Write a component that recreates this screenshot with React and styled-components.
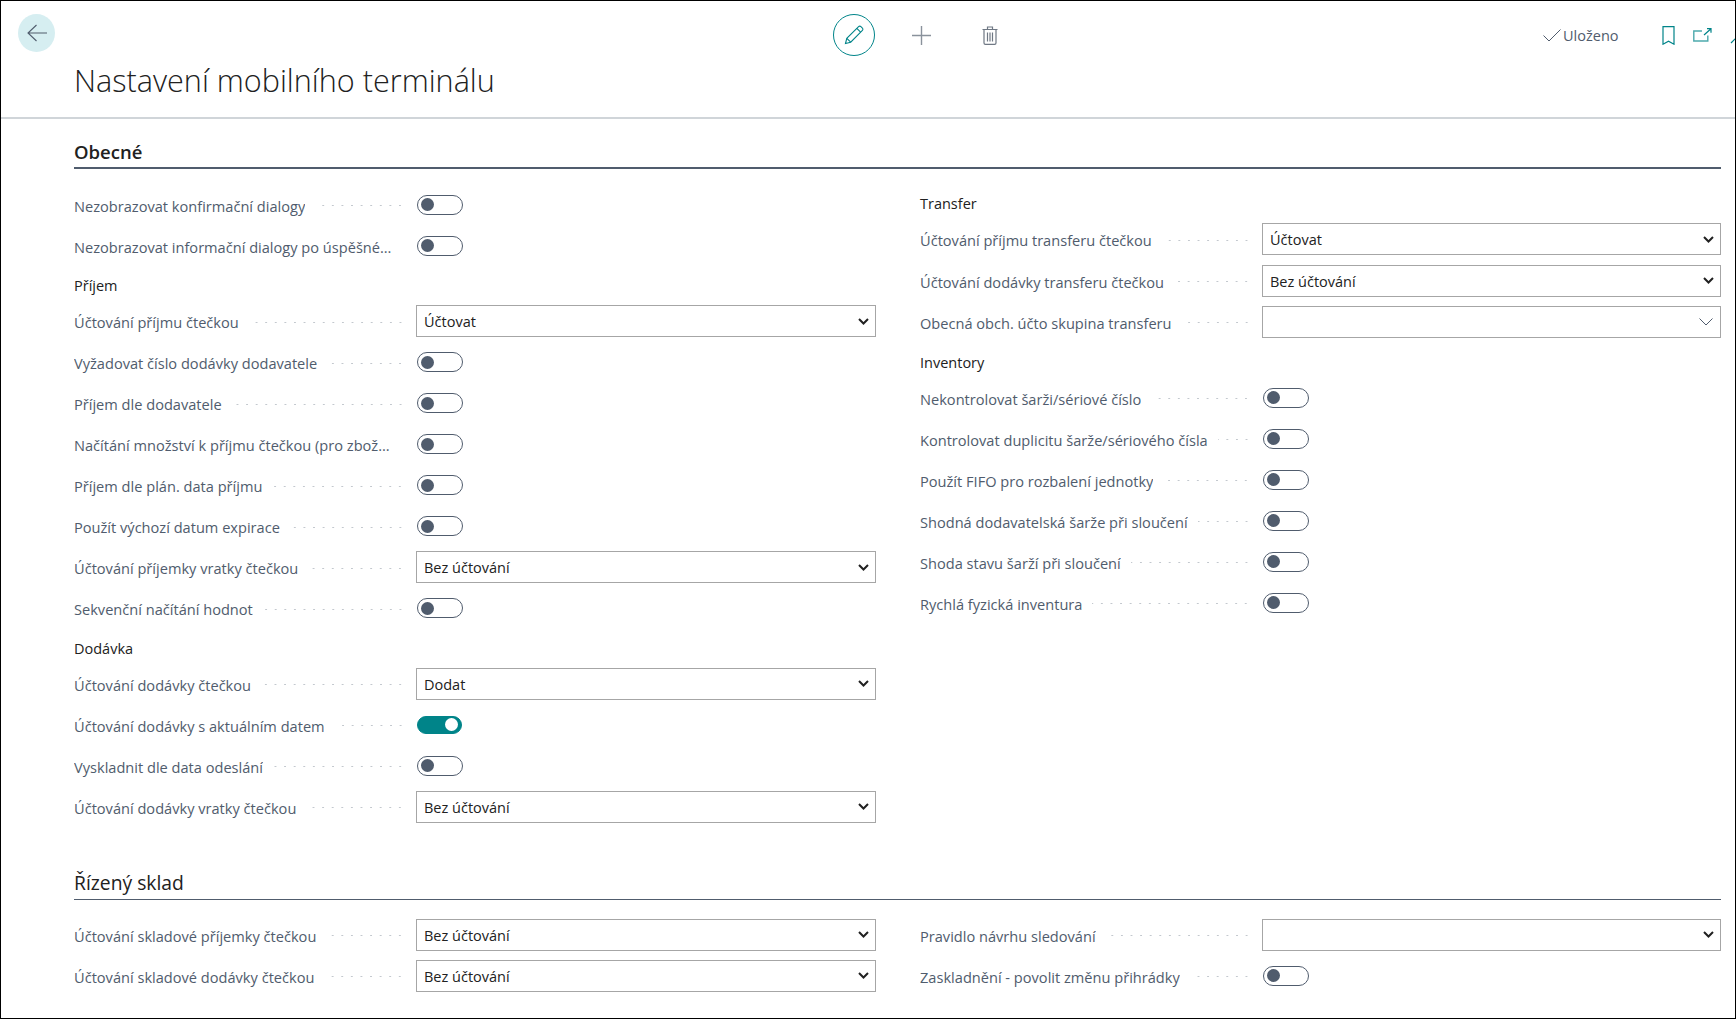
import React from "react";
import styled, { createGlobalStyle } from "styled-components";

const GlobalStyle = createGlobalStyle`
  html, body {
    margin: 0;
    padding: 0;
    background: #fff;
    font-family: "Open Sans", "Liberation Sans", sans-serif;
  }
  * {
    box-sizing: border-box;
  }
`;

const Page = styled.div`
  width: 1736px;
  height: 1019px;
  border: 1px solid #000;
  background: #fff;
  overflow: hidden;
`;

const Header = styled.header`
  height: 118px;
  border-bottom: 2px solid #d0d5d9;
`;

const TopBar = styled.div`
  display: flex;
  align-items: flex-start;
  height: 52px;
  padding: 13px 0 0 17px;
`;

const BackButton = styled.div`
  width: 37px;
  height: 38px;
  border-radius: 50%;
  background: #d6eef1;
  display: flex;
  align-items: center;
  justify-content: center;
  flex-shrink: 0;
`;

const Actions = styled.div`
  display: flex;
  align-items: center;
  height: 42px;
  margin-left: 778px;
`;

const EditButton = styled.div`
  width: 42px;
  height: 42px;
  border-radius: 50%;
  border: 1px solid #008489;
  display: flex;
  align-items: center;
  justify-content: center;
`;

const PlainAction = styled.div`
  display: flex;
  align-items: center;
  justify-content: center;
  margin-left: ${(p) => p.$gap}px;
`;

const Saved = styled.div`
  display: flex;
  align-items: center;
  height: 42px;
  margin-left: 545px;
  font-size: 14.5px;
  color: #505c6d;
  flex-shrink: 0;
  gap: 2px;
`;

const PageTools = styled.div`
  display: flex;
  align-items: center;
  height: 42px;
  margin-left: 43px;
  flex-shrink: 0;
`;

const ToolIcon = styled.div`
  display: flex;
  margin-left: ${(p) => p.$gap}px;
  flex-shrink: 0;
`;

const Title = styled.h1`
  margin: 6px 0 0;
  padding-left: 73px;
  font-size: 30.6px;
  line-height: 42px;
  font-weight: 300;
  color: #212121;
`;

const Content = styled.main`
  padding: 0 14px 0 73px;
`;

const Section = styled.section`
  margin-top: ${(p) => p.$top}px;
`;

const SectionHead = styled.h2`
  margin: 0;
  height: 50px;
  display: flex;
  align-items: flex-end;
  padding-bottom: ${(p) => (p.$open ? "2px" : "3px")};
  font-size: ${(p) => (p.$open ? "18.5px" : "19.3px")};
  line-height: 26px;
  font-weight: ${(p) => (p.$open ? 600 : 400)};
  color: #212121;
  border-bottom: ${(p) => (p.$open ? "2px" : "1px")} solid #505c6d;
`;

const Columns = styled.div`
  display: grid;
  grid-template-columns: 802px 801px;
  column-gap: 44px;
  padding-top: ${(p) => p.$top}px;
`;

const Group = styled.h3`
  margin: 0;
  height: 34.5px;
  padding-top: 11px;
  font-size: 14.5px;
  line-height: 18px;
  font-weight: 500;
  color: #212121;
`;

const Row = styled.div`
  display: grid;
  grid-template-columns: 342px 1fr;
  height: ${(p) => (p.$tall ? "41.4px" : "41px")};
  align-items: center;
`;

const LabelCell = styled.div`
  display: flex;
  align-items: center;
  min-width: 0;
  padding: 2px 11px 0 0;
`;

const Label = styled.span`
  font-size: 14.6px;
  line-height: 20px;
  color: #505c6d;
  white-space: nowrap;
  overflow: hidden;
  text-overflow: ellipsis;
  max-width: 318px;
`;

const Leader = styled.span`
  flex: 1;
  min-width: 0;
  height: 3px;
  margin-left: 10px;
  background-image: radial-gradient(circle, #c3c8ce 0.8px, transparent 1px);
  background-size: 9.6px 3px;
  background-position: right center;
  background-repeat: repeat-x;
`;

const SelectBox = styled.div`
  height: 32px;
  border: 1px solid #a6a6a6;
  display: flex;
  align-items: center;
  justify-content: space-between;
  padding: 0 6px 0 7px;
  font-size: 14.5px;
  color: #212121;
`;

const SelectValue = styled.span`
  padding-top: 1px;
`;

const LookupChevron = styled.span`
  display: flex;
  padding-right: 1px;
`;

const Track = styled.div`
  width: ${(p) => (p.$on ? "45px" : "46px")};
  height: ${(p) => (p.$on ? "18px" : "20px")};
  margin-left: 1px;
  border-radius: 10px;
  display: flex;
  align-items: center;
  border: 1px solid ${(p) => (p.$on ? "#008489" : "#505c6d")};
  background: ${(p) => (p.$on ? "#008489" : "#fff")};
  justify-content: ${(p) => (p.$on ? "flex-end" : "flex-start")};
  padding: 0 3px;
`;

const Knob = styled.div`
  width: 13px;
  height: 13px;
  border-radius: 50%;
  background: ${(p) => (p.$on ? "#fff" : "#505c6d")};
`;

const ArrowIcon = () => (
  <svg width="20" height="18" viewBox="0 0 20 18" fill="none" stroke="#505c6d" strokeWidth="1.1">
    <path d="M20 9H1M9.5 1L1 9l8.5 8" />
  </svg>
);

const PencilIcon = () => (
  <svg width="20" height="20" viewBox="0 0 20 20" fill="none" stroke="#008489" strokeWidth="1.1">
    <path d="M1.5 18.5l1.3-5.2L14.6 1.6a1.6 1.6 0 0 1 2.3 0l1.5 1.5a1.6 1.6 0 0 1 0 2.3L6.7 17.2z" />
    <path d="M2.8 13.3l3.9 3.9M12.8 3.4l3.8 3.8" />
  </svg>
);

const PlusIcon = () => (
  <svg width="19" height="19" viewBox="0 0 19 19" fill="none" stroke="#8a929c" strokeWidth="1.4">
    <path d="M9.5 0v19M0 9.5h19" />
  </svg>
);

const TrashIcon = () => (
  <svg width="16" height="19" viewBox="0 0 16 19" fill="none" stroke="#6f7884" strokeWidth="1.2">
    <path d="M0.5 3.5h15M5.5 3.5V1h5v2.5" />
    <path d="M2 3.5V17a1.4 1.4 0 0 0 1.4 1.4h9.2A1.4 1.4 0 0 0 14 17V3.5" />
    <path d="M5.5 6.5v9M8 6.5v9M10.5 6.5v9" />
  </svg>
);

const CheckIcon = () => (
  <svg width="18" height="13" viewBox="0 0 18 13" fill="none" stroke="#505c6d" strokeWidth="1">
    <path d="M0.5 6.5l5.5 5.5L17.5 0.5" />
  </svg>
);

const BookmarkIcon = () => (
  <svg width="13" height="19" viewBox="0 0 13 19" fill="none" stroke="#008489" strokeWidth="1.2">
    <path d="M1 0.6h11v17.6l-5.5-3-5.5 3z" />
  </svg>
);

const OpenIcon = () => (
  <svg width="19" height="14" viewBox="0 0 19 14" fill="none" stroke="#008489" strokeWidth="1.2">
    <path d="M9 3H0.8v10h14V7.5" strokeWidth="1.4" opacity="0.7" />
    <path d="M11 7L18 0.7M14 0.7h4v4" />
  </svg>
);

const CollapseIcon = () => (
  <svg width="18" height="18" viewBox="0 0 18 18" fill="none" stroke="#008489" strokeWidth="1.2">
    <path d="M1 17L16 2M10 2h6v6" />
  </svg>
);

const BoldChevron = () => (
  <svg width="11" height="7" viewBox="0 0 11 7" fill="none" stroke="#212121" strokeWidth="2">
    <path d="M1 1l4.5 4.5L10 1" />
  </svg>
);

const ThinChevron = () => (
  <svg width="14" height="8" viewBox="0 0 14 8" fill="none" stroke="#505c6d" strokeWidth="1">
    <path d="M0.5 0.5L7 7l6.5-6.5" />
  </svg>
);

const Toggle = ({ on }) => (
  <Track $on={on}>
    <Knob $on={on} />
  </Track>
);

const Select = ({ value }) => (
  <SelectBox>
    <SelectValue>{value}</SelectValue>
    <BoldChevron />
  </SelectBox>
);

const Lookup = () => (
  <SelectBox>
    <span />
    <LookupChevron>
      <ThinChevron />
    </LookupChevron>
  </SelectBox>
);

const Field = ({ label, tall, children }) => (
  <Row $tall={tall}>
    <LabelCell>
      <Label>{label}</Label>
      <Leader />
    </LabelCell>
    {children}
  </Row>
);

const BEZ = "Bez účtování";

const App = () => {
  return (
    <Page>
      <GlobalStyle />
      <Header>
        <TopBar>
          <BackButton>
            <ArrowIcon />
          </BackButton>
          <Actions>
            <EditButton>
              <PencilIcon />
            </EditButton>
            <PlainAction $gap={37}>
              <PlusIcon />
            </PlainAction>
            <PlainAction $gap={51}>
              <TrashIcon />
            </PlainAction>
          </Actions>
          <Saved>
            <CheckIcon />
            <span>Uloženo</span>
          </Saved>
          <PageTools>
            <ToolIcon $gap={0}>
              <BookmarkIcon />
            </ToolIcon>
            <ToolIcon $gap={18}>
              <OpenIcon />
            </ToolIcon>
            <ToolIcon $gap={18}>
              <CollapseIcon />
            </ToolIcon>
          </PageTools>
        </TopBar>
        <Title>Nastavení mobilního terminálu</Title>
      </Header>
      <Content>
        <Section $top={0}>
          <SectionHead $open>Obecné</SectionHead>
          <Columns $top={15}>
            <div>
              <Field label="Nezobrazovat konfirmační dialogy"><Toggle /></Field>
              <Field label="Nezobrazovat informační dialogy po úspěšném načtení"><Toggle /></Field>
              <Group>Příjem</Group>
              <Field label="Účtování příjmu čtečkou"><Select value="Účtovat" /></Field>
              <Field label="Vyžadovat číslo dodávky dodavatele"><Toggle /></Field>
              <Field label="Příjem dle dodavatele"><Toggle /></Field>
              <Field label="Načítání množství k příjmu čtečkou (pro zboží se šarží)"><Toggle /></Field>
              <Field label="Příjem dle plán. data příjmu"><Toggle /></Field>
              <Field label="Použít výchozí datum expirace"><Toggle /></Field>
              <Field label="Účtování příjemky vratky čtečkou"><Select value={BEZ} /></Field>
              <Field label="Sekvenční načítání hodnot"><Toggle /></Field>
              <Group>Dodávka</Group>
              <Field label="Účtování dodávky čtečkou"><Select value="Dodat" /></Field>
              <Field label="Účtování dodávky s aktuálním datem"><Toggle on /></Field>
              <Field label="Vyskladnit dle data odeslání"><Toggle /></Field>
              <Field label="Účtování dodávky vratky čtečkou"><Select value={BEZ} /></Field>
            </div>
            <div>
              <Group>Transfer</Group>
              <Field tall label="Účtování příjmu transferu čtečkou"><Select value="Účtovat" /></Field>
              <Field tall label="Účtování dodávky transferu čtečkou"><Select value={BEZ} /></Field>
              <Field tall label="Obecná obch. účto skupina transferu"><Lookup /></Field>
              <Group>Inventory</Group>
              <Field label="Nekontrolovat šarži/sériové číslo"><Toggle /></Field>
              <Field label="Kontrolovat duplicitu šarže/sériového čísla"><Toggle /></Field>
              <Field label="Použít FIFO pro rozbalení jednotky"><Toggle /></Field>
              <Field label="Shodná dodavatelská šarže při sloučení"><Toggle /></Field>
              <Field label="Shoda stavu šarží při sloučení"><Toggle /></Field>
              <Field label="Rychlá fyzická inventura"><Toggle /></Field>
            </div>
          </Columns>
        </Section>
        <Section $top={23}>
          <SectionHead>Řízený sklad</SectionHead>
          <Columns $top={14}>
            <div>
              <Field label="Účtování skladové příjemky čtečkou"><Select value={BEZ} /></Field>
              <Field label="Účtování skladové dodávky čtečkou"><Select value={BEZ} /></Field>
            </div>
            <div>
              <Field label="Pravidlo návrhu sledování"><Select value="" /></Field>
              <Field label="Zaskladnění - povolit změnu přihrádky"><Toggle /></Field>
            </div>
          </Columns>
        </Section>
      </Content>
    </Page>
  );
};

export default App;
